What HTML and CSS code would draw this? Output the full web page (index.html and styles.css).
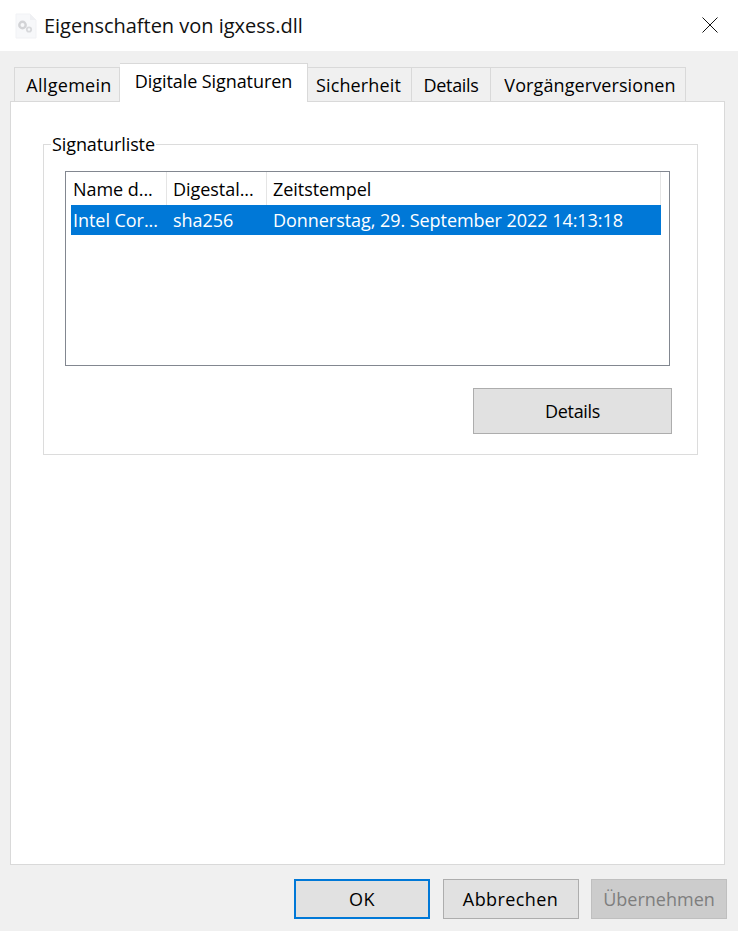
FILE: index.html
```html
<!DOCTYPE html>
<html lang="de">
<head>
<meta charset="utf-8">
<title>Eigenschaften von igxess.dll</title>
<link rel="stylesheet" href="styles.css">
</head>
<body>
<div class="dialog">
  <header class="titlebar">
    <svg class="file-icon" width="22" height="26" viewBox="0 0 22 26">
      <path d="M1 1h14l6 6v18H1z" fill="#f7f8fa" stroke="#f1f2f5"/>
      <path d="M15 1v6h6" fill="#eff0f3"/>
      <circle cx="7.5" cy="12" r="3.2" fill="none" stroke="#d2d3d6" stroke-width="2.4"/>
      <circle cx="14" cy="16.5" r="2.2" fill="none" stroke="#d8d9dc" stroke-width="1.8"/>
    </svg>
    <span class="title">Eigenschaften von igxess.dll</span>
    <svg class="close" width="16" height="16" viewBox="0 0 16 16">
      <path d="M0.5 0.5L15.5 15.5M15.5 0.5L0.5 15.5" stroke="#111" stroke-width="1" fill="none"/>
    </svg>
  </header>
  <div class="body">
    <nav class="tabs">
      <div class="tab tab-first">Allgemein</div>
      <div class="tab tab-active">Digitale Signaturen</div>
      <div class="tab tab-security">Sicherheit</div>
      <div class="tab tab-details">Details</div>
      <div class="tab tab-prev">Vorgängerversionen</div>
    </nav>
    <main class="panel">
      <fieldset class="group">
        <legend class="legend">Signaturliste</legend>
        <div class="list">
          <div class="row head">
            <div class="cell c1">Name d...</div>
            <div class="cell c2">Digestal...</div>
            <div class="cell c3">Zeitstempel</div>
          </div>
          <div class="row selected">
            <div class="cell c1">Intel Cor...</div>
            <div class="cell c2">sha256</div>
            <div class="cell c3">Donnerstag, 29. September 2022 14:13:18</div>
          </div>
        </div>
        <div class="group-actions">
          <button class="btn btn-details">Details</button>
        </div>
      </fieldset>
    </main>
    <footer class="footer">
      <button class="btn btn-foot btn-ok">OK</button>
      <button class="btn btn-foot btn-cancel">Abbrechen</button>
      <button class="btn btn-foot btn-disabled">Übernehmen</button>
    </footer>
  </div>
</div>
</body>
</html>
```
FILE: styles.css
```css
* { box-sizing: border-box; }
html, body { margin: 0; height: 100%; }
body {
  font-family: "Open Sans", "Noto Sans", "Liberation Sans", sans-serif;
  font-size: 18px;
  color: #000;
  background: #f0f0f0;
}
.dialog { width: 738px; height: 931px; display: flex; flex-direction: column; overflow: hidden; }
.titlebar {
  height: 51px; background: #fff; display: flex; align-items: center;
  padding: 0 20px 0 15px; flex: none;
}
.file-icon { flex: none; }
.title { font-size: 20px; margin-left: 7px; color: #111; letter-spacing: -0.02px; flex: 1; }
.close { flex: none; margin-top: -1px; }
.body { flex: 1; display: flex; flex-direction: column; padding: 12px 13px 0 10px; }
.tabs { display: flex; align-items: flex-end; height: 39px; margin-left: 4px; position: relative; z-index: 1; flex: none; }
.tab {
  height: 35px; display: flex; align-items: center; justify-content: center;
  border: 1px solid #d9d9d9; border-left-width: 0; background: #f0f0f0;
  white-space: nowrap; letter-spacing: 0.1px;
}
.tab-first { width: 106px; border-left-width: 1px; letter-spacing: 0.3px; padding: 0 1px 0 5px; }
.tab-active { width: 188px; height: 39px; background: #fff; border-bottom: 0; padding-bottom: 4px; letter-spacing: -0.08px; }
.tab-security { width: 104px; letter-spacing: 0.15px; padding-right: 2px; }
.tab-details { width: 79px; letter-spacing: -0.35px; }
.tab-prev { width: 195px; padding-left: 4px; }
.panel { height: 764px; margin-top: -1px; background: #fff; border: 1px solid #d9d9d9; padding: 31px 26px 0 32px; flex: none; }
.group { height: 322px; margin: 0; border: 1px solid #dcdcdc; padding: 16px 21px 0 21px; min-width: 0; }
.legend { padding: 0 1px; margin-left: -14px; line-height: 22px; letter-spacing: -0.1px; }
.list { height: 195px; width: 605px; border: 1px solid #828790; background: #fff; padding: 0 8px 0 5px; }
.row { display: grid; grid-template-columns: 96px 100px 394px; }
.head { height: 33px; align-items: center; border-right: 1px solid #e5e5e5; }
.head .cell { height: 33px; border-right: 1px solid #e5e5e5; line-height: 35px; }
.selected { height: 30px; background: #0078d7; color: #fff; align-items: center; }
.cell { padding-left: 2px; white-space: nowrap; overflow: hidden; letter-spacing: -0.05px; }
.c2, .c3 { padding-left: 6px; }
.group-actions { display: flex; justify-content: flex-end; margin-top: 22px; margin-right: 4px; }
.btn {
  font: inherit; letter-spacing: -0.35px; color: #000; background: #e1e1e1; border: 1px solid #adadad;
  padding: 0; margin: 0;
}
.btn-details { width: 199px; height: 46px; }
.footer { flex: 1; display: flex; justify-content: flex-end; gap: 13px; padding-top: 14px; margin-right: -2px; }
.btn-foot { width: 136px; height: 40px; }
.btn-foot + .btn-foot + .btn-foot { margin-left: -1px; }
.btn-ok { border: 2px solid #0078d7; letter-spacing: 0.5px; }
.btn-cancel { letter-spacing: 0.4px; padding-right: 1px; }
.btn-disabled { background: #cccccc; border-color: #bfbfbf; color: #7e7e7e; letter-spacing: 0px; }
```
